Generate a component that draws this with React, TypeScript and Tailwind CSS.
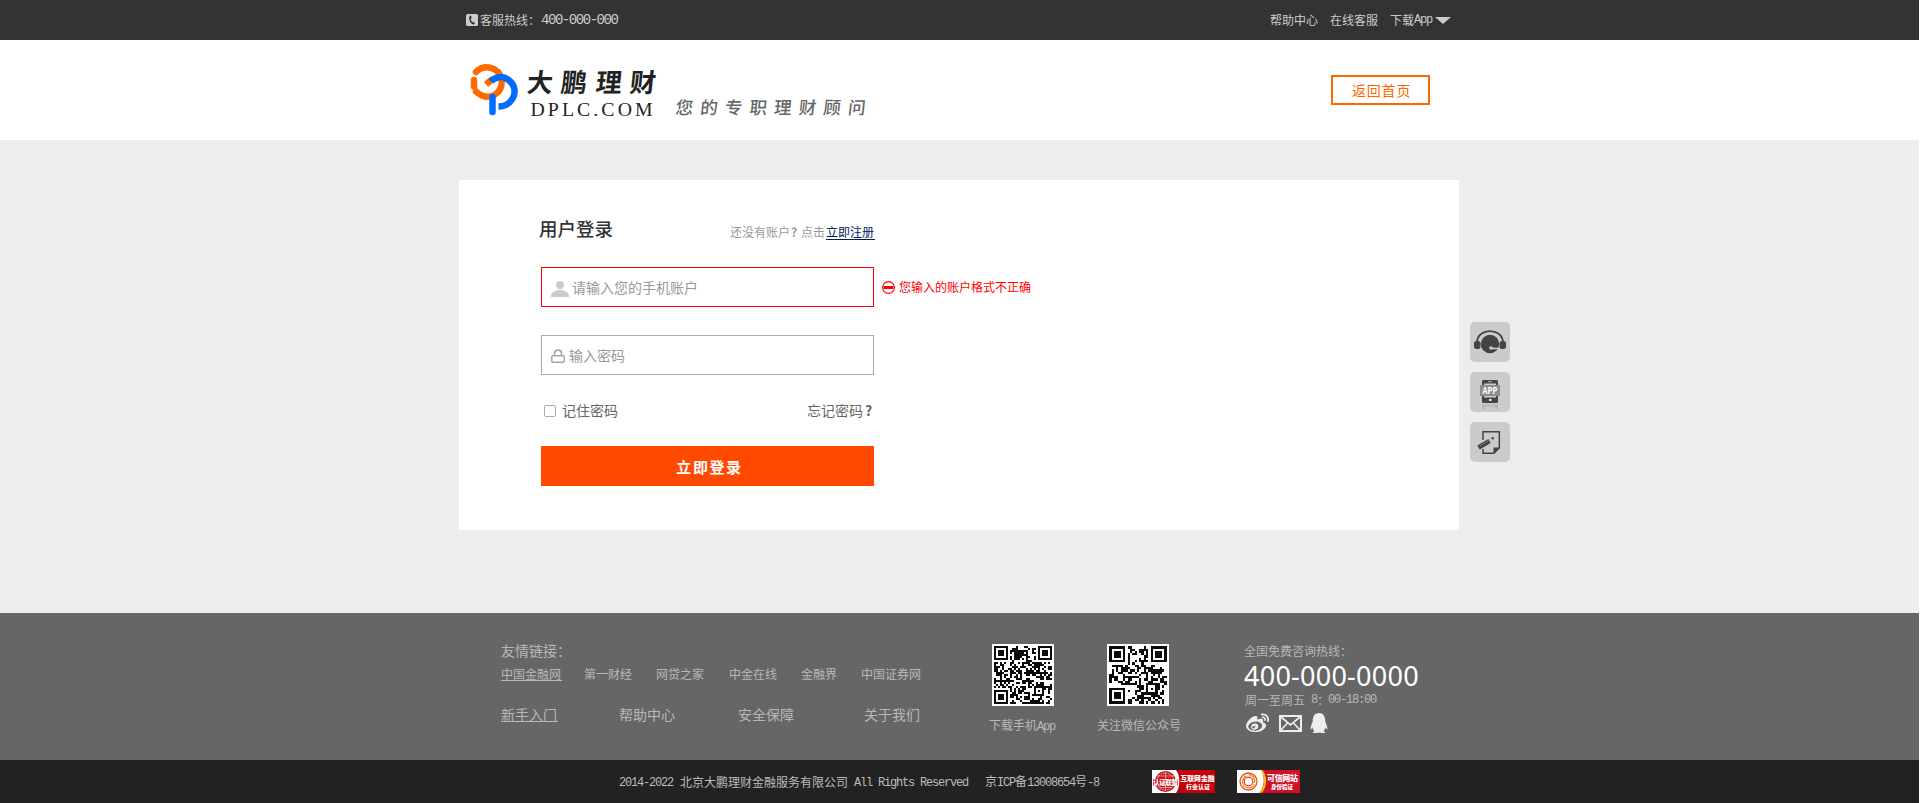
import React from "react";
import { FaQq, FaWeibo } from "react-icons/fa";

const friendLinks = [
  { label: "中国金融网", cls: "w-[61px] mr-[22px] border-b border-[#b8b8b8]" },
  { label: "第一财经", cls: "mr-6" },
  { label: "网贷之家", cls: "mr-[25px]" },
  { label: "中金在线", cls: "mr-6" },
  { label: "金融界", cls: "mr-6" },
  { label: "中国证券网", cls: "" },
];

const siteLinks = [
  { label: "新手入门", cls: "w-[57px] mr-[61px] border-b border-[#b8b8b8]" },
  { label: "帮助中心", cls: "mr-[63px]" },
  { label: "安全保障", cls: "mr-[70px]" },
  { label: "关于我们", cls: "" },
];

function Mono({ children }: { children: React.ReactNode }) {
  return (
    <span className="font-['Liberation_Mono',monospace] text-[12px] tracking-[-1.2px] whitespace-pre">
      {children}
    </span>
  );
}

function qrPath(size: number, seed: number, align: number) {
  let state = seed;
  const next = () => {
    state = (state * 1103515245 + 12345) % 2147483648;
    return state / 2147483648;
  };
  const ring = (dx: number, dy: number, outer: number) => {
    const d = Math.max(Math.abs(dx), Math.abs(dy));
    return outer === 3 ? d === 3 || d <= 1 : d === 2 || d === 0;
  };
  const corners = [
    [3, 3],
    [size - 4, 3],
    [3, size - 4],
  ];
  let d = "";
  for (let y = 0; y < size; y++) {
    for (let x = 0; x < size; x++) {
      let on = next() > 0.5;
      for (const [cx, cy] of corners) {
        if (Math.max(Math.abs(x - cx), Math.abs(y - cy)) <= 4) on = ring(x - cx, y - cy, 3);
      }
      if (Math.max(Math.abs(x - align), Math.abs(y - align)) <= 2) on = ring(x - align, y - align, 2);
      if (on) d += `M${x} ${y}h1v1h-1z`;
    }
  }
  return d;
}

function QrCode({ size, seed, align }: { size: number; seed: number; align: number }) {
  return (
    <svg width="62" height="62" viewBox={`-1 -1 ${size + 2} ${size + 2}`} className="block bg-white">
      <path d={qrPath(size, seed, align)} fill="#0a0a0a" shapeRendering="crispEdges" />
    </svg>
  );
}

function TopBar() {
  return (
    <div className="flex h-10 items-center bg-[#333] pl-[466px] text-[12px] leading-[40px] text-[#ccc]">
      <svg width="12" height="12" viewBox="0 0 12 12" className="mr-[2px]">
        <rect width="12" height="12" rx="1.5" fill="#ccc" />
        <path d="M5 1.6 3.3 2.6C2.4 6 4.6 9.700 7.400 10.700L9 9.600 7.500 7.700 6.500 8.200C5.400 7.200 4.800 5.900 4.700 4.500L5.700 4z" fill="#333" />
      </svg>
      <span className="w-[61px] whitespace-nowrap">客服热线：</span>
      <span className="w-[729px] font-['Liberation_Mono',monospace] text-[14px] tracking-[-1.45px]">400-000-000</span>
      <span className="mr-3">帮助中心</span>
      <span className="mr-3">在线客服</span>
      <span className="flex">
        下载<Mono>App</Mono>
      </span>
      <svg width="16" height="7" viewBox="0 0 16 7" className="ml-[3px]">
        <path d="M0 0H16L8 7z" fill="#ccc" />
      </svg>
    </div>
  );
}

function Header() {
  return (
    <header className="flex h-[100px] items-start bg-white pl-[466px]">
      <svg width="410" height="100" viewBox="466 40 410 100" className="block">
        <g fill="none" strokeWidth="6.500">
          <path d="M476 72A15 15 0 0 1 501.500 79" stroke="#ff6a00" strokeLinecap="round" />
          <path d="M474 80V86.500" stroke="#ff6a00" strokeLinecap="round" />
          <path d="M501.700 82C501.700 93 491 99.500 482 95.500 479 94.300 477.500 93 476 91.500" stroke="#ff6a00" strokeLinecap="round" />
          <path d="M486 84.500 492.500 79" stroke="#ff6a00" />
          <path d="M491 81.500C495 76.500 503 75.500 508.500 80 515 84.500 516.500 93 512 99.500 509 104 504 106.500 498.500 106.500" stroke="#006cff" />
          <path d="M492.500 97V112" stroke="#006cff" strokeLinecap="round" />
        </g>
        <g fill="#222" fontFamily="'Noto Sans CJK SC', sans-serif" fontSize="26" fontWeight="700">
          <text transform="translate(526 92) skewX(-6)">大</text>
          <text transform="translate(560 92) skewX(-6)">鹏</text>
          <text transform="translate(595 92) skewX(-6)">理</text>
          <text transform="translate(629 92) skewX(-6)">财</text>
        </g>
        <text transform="translate(530.500 116) scale(1.100 1)" textLength="111" fill="#222" fontFamily="'Liberation Serif', serif" fontSize="18">
          DPLC.COM
        </text>
        <g fill="#666" fontFamily="'Noto Sans CJK SC', sans-serif" fontSize="17.500" fontWeight="500">
          <text transform="translate(675 114) skewX(-6)" textLength="190">
            您的专职理财顾问
          </text>
        </g>
      </svg>
      <a className="mt-[35px] ml-[455px] h-[30px] w-[99px] border-2 border-[#f60] pl-[19px] text-[14px] leading-[27px] tracking-[0.8px] text-[#f60]">
        返回首页
      </a>
    </header>
  );
}

function LoginCard() {
  return (
    <section className="h-[350px] w-[1000px] bg-white pt-[37px] pl-[82px]">
      <div className="flex h-[26px] w-[334px] items-center">
        <h1 className="-mt-[2px] -ml-[2px] w-[191px] text-[18.5px] font-medium text-[#333]">用户登录</h1>
        <p className="flex pt-[3px] text-[12px] leading-[18px] whitespace-nowrap text-[#999]">
          <span className="w-[60px]">还没有账户</span>
          <span className="w-[11px] pl-[1px] font-bold">?</span>
          <span className="mr-[1px]">点击</span>
          <a className="-mb-[2px] h-[17px] w-[49px] border-b border-[#001a5a] text-[#001a5a]">立即注册</a>
        </p>
      </div>

      <div className="mt-6 flex items-center">
        <div className="flex h-10 w-[333px] items-center border border-[#f00] pl-[9px] text-[14px] text-[#999]">
          <svg width="18" height="16" viewBox="0 0 18 16" className="mt-[3px] mr-[3px]">
            <circle cx="9" cy="4" r="4" fill="#ccc" />
            <path d="M0 16V14C1 11 5 9 9 9S17 11 18 14V16z" fill="#ccc" />
          </svg>
          <span>请输入您的手机账户</span>
        </div>
        <svg width="13" height="13" viewBox="0 0 13 13" className="mr-1 ml-2">
          <circle cx="6.500" cy="6.500" r="5.900" fill="none" stroke="#f00" strokeWidth="1.100" />
          <rect x="1.500" y="5" width="10" height="3" fill="#f00" />
        </svg>
        <span className="text-[12px] text-[#f00]">您输入的账户格式不正确</span>
      </div>

      <div className="mt-7 flex h-10 w-[333px] items-center border border-[#aaa] pl-[9px] text-[14px] text-[#999]">
        <svg width="14" height="14" viewBox="0 0 14 14" className="mt-[2px] mr-[4px]" fill="none" stroke="#a5a5a5">
          <rect x="0.800" y="6.800" width="12.400" height="6.400" rx="1" strokeWidth="1.500" />
          <path d="M3.500 6.500V4.500C3.500 0 10.500 0 10.500 4.500V6.500" strokeWidth="1.600" />
        </svg>
        <span>输入密码</span>
      </div>

      <div className="mt-[26px] flex h-5 w-[333px] items-center text-[14px] text-[#666]">
        <span className="ml-[3px] h-3 w-3 rounded-[2px] border border-[#aaa] bg-white" />
        <span className="-mt-[2px] ml-[6px]">记住密码</span>
        <a className="-mt-[2px] ml-auto flex">
          忘记密码<span className="w-[11px] pl-[2px] font-bold">?</span>
        </a>
      </div>

      <button className="mt-[25px] block h-10 w-[333px] bg-[#ff4a00] pt-[2px] pl-[4px] text-center text-[15px] font-bold tracking-[1.6px] text-white">
        立即登录
      </button>
    </section>
  );
}

function SideTools() {
  return (
    <aside className="mt-[142px] ml-[11px] flex flex-col gap-[10px]">
      <div className="h-10 w-10 rounded-[5px] bg-[#cbcbcb]">
        <svg width="40" height="40" viewBox="0 0 40 40">
          <path d="M7 20C8 5.500 32 5.500 33 20" fill="none" stroke="#444" strokeWidth="1.800" />
          <circle cx="20" cy="22" r="9.200" fill="#444" />
          <rect x="4" y="19" width="6.500" height="8" rx="2.500" fill="#444" />
          <rect x="29.500" y="19" width="6.500" height="8" rx="2.500" fill="#444" />
          <path d="M30 26.500H22" stroke="#cbcbcb" strokeWidth="1.600" />
          <circle cx="21" cy="26" r="1.800" fill="#cbcbcb" />
        </svg>
      </div>
      <div className="h-10 w-10 rounded-[5px] bg-[#cbcbcb]">
        <svg width="40" height="40" viewBox="0 0 40 40">
          <rect x="12" y="8" width="16" height="23" rx="1.500" fill="#444" />
          <rect x="14" y="11.500" width="12" height="14" fill="#cbcbcb" />
          <path d="M18 9.700H22" stroke="#ccc" strokeWidth="0.800" />
          <rect x="19" y="27" width="2.500" height="2" fill="#eee" />
          <path d="M12 32.500H28V37H25V34.500H15V37H12z" fill="#b8b8b8" />
          <rect x="10" y="13" width="20" height="11" fill="#8d8d8d" />
          <text x="12.500" y="22" textLength="15" lengthAdjust="spacingAndGlyphs" fill="#fff" fontSize="10" fontWeight="700" fontFamily="'Liberation Mono', monospace">
            APP
          </text>
        </svg>
      </div>
      <div className="h-10 w-10 rounded-[5px] bg-[#cbcbcb]">
        <svg width="40" height="40" viewBox="0 0 40 40" fill="none">
          <path d="M13 18V9.700H29.300V26L24 31.300H13V27" stroke="#444" strokeWidth="1.500" />
          <path d="M23.500 31.500V25.500H29.500z" fill="#444" />
          <path d="M8.500 25.500 19.500 19" stroke="#444" strokeWidth="4.500" />
          <path d="M10 23.800 18.500 18.800" stroke="#888" strokeWidth="0.800" />
          <circle cx="22.700" cy="16.300" r="1.200" fill="#444" />
        </svg>
      </div>
    </aside>
  );
}

function Footer() {
  return (
    <footer className="flex h-[147px] items-start bg-[#666] pl-[501px] text-[12px] whitespace-nowrap text-[#b8b8b8]">
      <div className="w-[489px] pt-[27px]">
        <p className="text-[14px] leading-5">友情链接：</p>
        <div className="mt-[5px] flex leading-[18px]">
          {friendLinks.map((l) => (
            <a key={l.label} className={`h-4 ${l.cls}`}>
              {l.label}
            </a>
          ))}
        </div>
        <div className="mt-[23px] flex text-[14px] leading-5">
          {siteLinks.map((l) => (
            <a key={l.label} className={`h-[18px] ${l.cls}`}>
              {l.label}
            </a>
          ))}
        </div>
      </div>
      <div className="w-[107px] pt-[31px]">
        <div className="ml-[2px]">
          <QrCode size={29} seed={4711} align={22} />
        </div>
        <p className="mt-[10px] -ml-px leading-[18px]">
          下载手机<Mono>App</Mono>
        </p>
      </div>
      <div className="w-[147px] pt-[31px]">
        <div className="ml-[10px]">
          <QrCode size={25} seed={977} align={18} />
        </div>
        <p className="mt-[10px] leading-[18px]">关注微信公众号</p>
      </div>
      <div className="pt-[29px]">
        <p className="leading-[18px]">全国免费咨询热线：</p>
        <p className="mt-[1px] font-['Noto_Sans',sans-serif] text-[27px] leading-[30px] tracking-[0.25px] text-white">400-000-0000</p>
        <p className="ml-[1px] flex leading-[18px]">
          <span className="w-[66px]">周一至周五</span>
          <Mono>8</Mono>
          <span className="w-[11px]">：</span>
          <Mono>00-18:00</Mono>
        </p>
        <div className="mt-[3px] flex h-[22px] items-center text-[#eee]">
          <FaWeibo size={23} className="ml-[2px]" />
          <svg width="23" height="17" viewBox="0 0 23 17" className="ml-[10px]" fill="none" stroke="#eee" strokeWidth="2">
            <rect x="1" y="1" width="21" height="15" />
            <path d="M2 2 11.500 10 21 2M2 15 8.500 8M21 15 14.500 8" strokeWidth="1.700" />
          </svg>
          <FaQq size={20} className="ml-[7px]" />
        </div>
      </div>
    </footer>
  );
}

function IndustryBadge() {
  return (
    <svg width="63" height="23" viewBox="0 0 63 23" className="overflow-visible" fontFamily="'Noto Sans CJK SC', sans-serif" fontWeight="900">
      <rect width="63" height="23" fill="#fff" />
      <path d="M24 0H63V23H24C28.500 17 28.500 6 24 0z" fill="#c60008" />
      <circle cx="13.500" cy="11.500" r="10.500" fill="#c8161d" />
      <circle cx="13.500" cy="11.500" r="8.500" fill="none" stroke="#fff" strokeWidth="0.700" strokeDasharray="1.500 1" />
      <path d="M5 6H22M4 9.500H23M7 17.500H20M13.500 2V21" stroke="#fff" strokeWidth="0.500" />
      <rect x="1" y="9" width="25" height="6.500" fill="#c8161d" />
      <text x="1" y="14.800" fontSize="6.500" textLength="25" fill="#fff">认证联盟</text>
      <text x="28.500" y="10.500" fontSize="7" textLength="34" lengthAdjust="spacingAndGlyphs" fill="#fff">互联网金融</text>
      <text x="34" y="19" fontSize="6" textLength="24" fill="#fff">行业认证</text>
    </svg>
  );
}

function TrustBadge() {
  return (
    <svg width="63" height="23" viewBox="0 0 63 23" className="overflow-visible" fontFamily="'Noto Sans CJK SC', sans-serif" fontWeight="900">
      <rect width="63" height="23" fill="#fff" />
      <path d="M24 0H63V23H22C28 17 28 6 24 0z" fill="#d01027" />
      <path d="M23.500 0C28.500 6 28.500 17 22 23H24.500C30.500 17 30.500 6 25.500 0z" fill="#f5c400" />
      <g fill="none">
        <circle cx="11.500" cy="11.500" r="8.500" stroke="#e5501c" strokeWidth="1.300" />
        <g stroke="#f08a1f" strokeWidth="1.300">
          <path d="M11.500 4.500C16 5 18.500 8.500 17.500 13" />
          <path d="M18 14C15.500 18 11.500 19 8 16.500" />
          <path d="M7.500 17C4.500 13 5 8 9.500 5.500" />
        </g>
        <circle cx="11.500" cy="11.500" r="4.300" stroke="#e5401c" strokeWidth="1.200" />
      </g>
      <text x="30" y="10.500" fontSize="8" textLength="31" fill="#fff">可信网站</text>
      <text x="34" y="18.500" fontSize="5.500" textLength="22" fill="#fff">身份验证</text>
    </svg>
  );
}

function CopyrightBar() {
  return (
    <div className="flex h-[43px] items-center bg-[#222] pl-[619px] text-[12px] whitespace-nowrap text-[#bbb]">
      <span className="w-[61px]">
        <Mono>2014-2022</Mono>
      </span>
      <span className="w-[174px]">北京大鹏理财金融服务有限公司</span>
      <span className="w-[131px]">
        <Mono>All Rights Reserved</Mono>
      </span>
      <span className="w-[167px]">
        京<Mono>ICP</Mono>备<Mono>13008654</Mono>号<Mono>-8</Mono>
      </span>
      <IndustryBadge />
      <span className="w-[22px]" />
      <TrustBadge />
    </div>
  );
}

export default function App() {
  return (
    <div className="h-[803px] w-[1919px] overflow-hidden bg-white font-['Noto_Sans_CJK_SC',sans-serif]">
      <TopBar />
      <Header />
      <main className="flex h-[473px] items-start bg-[#ededed] pt-[40px] pl-[459px]">
        <LoginCard />
        <SideTools />
      </main>
      <Footer />
      <CopyrightBar />
    </div>
  );
}
